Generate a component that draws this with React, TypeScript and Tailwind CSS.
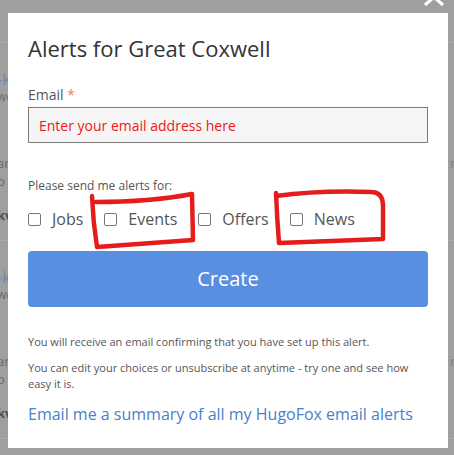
import { useState } from "react";

function BgItem() {
  return (
    <div className="flex h-[198px] justify-between border-t border-[#ababab]">
      <div className="-ml-[3px] pt-[26px]">
        <div className="text-[16px] leading-[20px] text-[#6f89ad]">-k</div>
        <div className="text-[12px] leading-[16px] text-[#6b6b6b]">we</div>
        <div className="mt-[50px] text-[13px] leading-[16px] text-[#6b6b6b]">ar</div>
        <div className="mt-[2px] text-[13px] leading-[16px] text-[#6b6b6b]">o</div>
        <div className="mt-[18px] text-[13px] font-bold leading-[16px] text-[#4d4d4d]">kv</div>
      </div>
      <div className="-mr-[4px] pt-[112px] text-[13px] leading-[16px] text-[#6e7f96]">n</div>
    </div>
  );
}

function Check({ label }: { label: string }) {
  const [on, setOn] = useState(false);
  return (
    <label className="mr-[21px] flex items-center">
      <input
        type="checkbox"
        checked={on}
        onChange={() => setOn(!on)}
        className="h-[13px] w-[13px] appearance-none rounded-[2px] border border-[#767676] bg-white"
      />
      <span className="ml-[11px] text-[16px] leading-[24px] text-[#555]">{label}</span>
    </label>
  );
}

export default function App() {
  return (
    <div className="relative h-[455px] w-[454px] overflow-hidden bg-[#9f9f9f] font-['Open_Sans',sans-serif]">
      <div className="pt-[42px]">
        <BgItem />
        <BgItem />
        <div className="border-t border-[#ababab]" />
      </div>

      <svg className="absolute right-[8px] top-[-13px] h-[20px] w-[24px]" viewBox="0 0 24 20">
        <path d="M3 2 L21 18 M21 2 L3 18" stroke="#fff" strokeWidth="3.2" fill="none" />
      </svg>

      <div className="absolute left-[8px] top-[13px] w-[440px] bg-white px-5 pb-[22px] pt-[19px]">
        <h2 className="text-[22px] leading-[32px] text-[#333]">Alerts for Great Coxwell</h2>

        <div className="mt-[21px] text-[14px] leading-[20px] text-[#555]">
          Email <span className="text-[#ef8354]">*</span>
        </div>
        <input
          type="email"
          placeholder="Enter your email address here"
          className="mt-[2px] h-[36px] w-full border border-[#7a7a7a] bg-[#f5f5f5] px-[10px] text-[14px] outline-none placeholder:text-[#f01717]"
        />

        <div className="mt-[34px] text-[12px] leading-[17px] text-[#555]">Please send me alerts for:</div>
        <div className="mt-[13px] flex">
          <Check label="Jobs" />
          <Check label="Events" />
          <Check label="Offers" />
          <Check label="News" />
        </div>

        <button className="mt-[20px] h-[56px] w-full rounded-[4px] bg-[#5a8ee0] text-[20px] text-white">
          Create
        </button>

        <p className="mt-[26px] text-[11px] leading-[17px] text-[#555]">
          You will receive an email confirming that you have set up this alert.
        </p>
        <p className="mt-[10px] text-[11px] leading-[16px] text-[#555]">
          You can edit your choices or unsubscribe at anytime - try one and see how easy it is.
        </p>

        <a href="#" className="mt-[10px] block text-[16px] leading-[24px] text-[#4a80cc]">
          Email me a summary of all my HugoFox email alerts
        </a>
      </div>

      <svg className="pointer-events-none absolute inset-0 h-[455px] w-[454px]" viewBox="0 0 454 455">
        <g stroke="#e41c1c" strokeWidth="4.5" fill="none" strokeLinecap="round" strokeLinejoin="round">
          <path d="M92 196 Q93 222 97 247 L193 240 L192 194 Q150 202 96 202" />
          <path d="M276 193 Q277 218 279 243 L383 239 L383 206 Q383 192 371 192 Q320 190 276 196" />
        </g>
      </svg>
    </div>
  );
}
